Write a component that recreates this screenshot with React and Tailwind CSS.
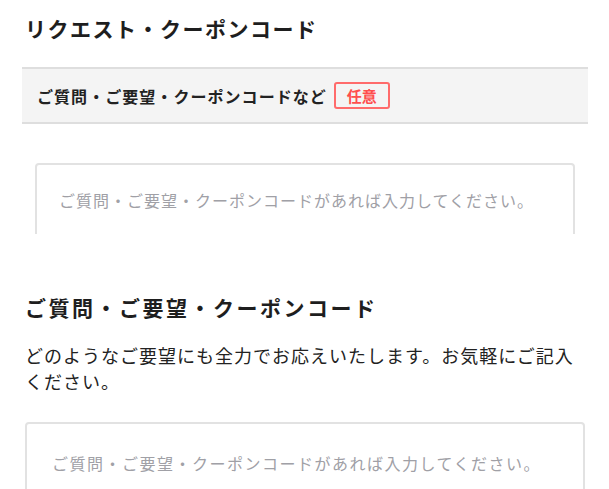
const jp = { fontFamily: '"Noto Sans CJK JP", "Noto Sans", sans-serif' };

const PLACEHOLDER = "ご質問・ご要望・クーポンコードがあれば入力してください。";

function RequestPanel() {
  return (
    <section className="h-[234px] overflow-hidden pl-[22px] pr-[21px] pt-[13px]">
      <h2 className="pl-[3px] text-[21px] leading-[30px] font-bold tracking-[1.5px] text-[#1e1e1e]">
        リクエスト・クーポンコード
      </h2>
      <div className="mt-[24px] flex h-[57px] items-center border-y-2 border-[#dedede] bg-[#f4f4f4] pl-[15px]">
        <span className="text-[16px] leading-6 font-bold tracking-[1.05px] text-[#222]">
          ご質問・ご要望・クーポンコードなど
        </span>
        <span className="ml-[7px] rounded-[3px] border-2 border-[#ff6b6b] px-[11px] text-[15px] leading-[23px] font-bold text-[#ff4d4d]">
          任意
        </span>
      </div>
      <div className="px-[13px] pt-[39px]">
        <textarea
          rows={4}
          placeholder={PLACEHOLDER}
          style={jp}
          className="block h-[120px] w-full resize-none rounded border-2 border-[#e2e2e2] bg-white pl-[22px] pt-[23px] text-[16px] leading-6 tracking-[1px] outline-none placeholder:text-[#a0a0a6]"
        />
      </div>
    </section>
  );
}

function RequestForm() {
  return (
    <section className="pl-[25px] pr-[24px] pt-[58px]">
      <h2 className="text-[21px] leading-[30px] font-bold tracking-[2.5px] text-[#1e1e1e]">
        ご質問・ご要望・クーポンコード
      </h2>
      <p className="mt-[20px] text-[18px] leading-[26px] tracking-[1px] text-[#222]">
        どのようなご要望にも全力でお応えいたします。お気軽にご記入ください。
      </p>
      <textarea
        rows={4}
        placeholder={PLACEHOLDER}
        style={jp}
        className="mt-[28px] block h-[120px] w-full resize-none rounded border-2 border-[#e2e2e2] bg-white pl-[25px] pt-[27px] text-[16px] leading-6 tracking-[1.5px] outline-none placeholder:text-[#a0a0a6]"
      />
    </section>
  );
}

export default function App() {
  return (
    <div style={jp} className="min-h-screen bg-white">
      <RequestPanel />
      <RequestForm />
    </div>
  );
}
